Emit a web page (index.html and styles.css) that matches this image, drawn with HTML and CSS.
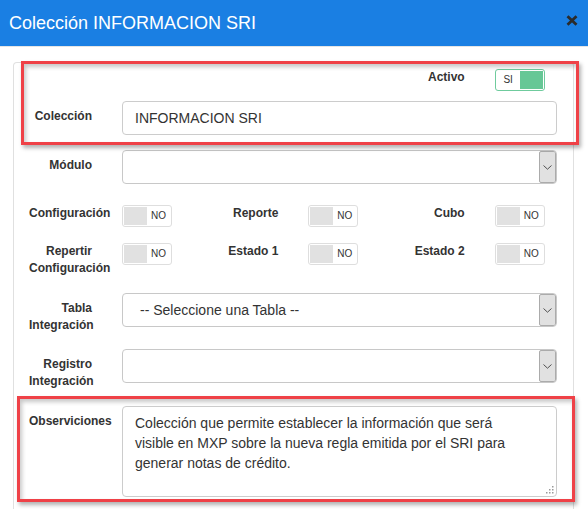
FILE: index.html
```html
<!DOCTYPE html>
<html lang="es">
<head>
<meta charset="utf-8">
<title>Colección INFORMACION SRI</title>
<link rel="stylesheet" href="styles.css">
</head>
<body>
<div class="modal">
  <div class="modal-header">
    <h4 class="modal-title">Colección INFORMACION SRI</h4>
    <span class="close" aria-label="Cerrar">
      <svg width="12" height="11" viewBox="0 0 12 11"><path d="M1.5 1.2 L10.5 9.8 M10.5 1.2 L1.5 9.8" stroke="#2b2b2b" stroke-width="2.8" fill="none"/></svg>
    </span>
  </div>
  <div class="modal-body">
    <div class="panel">
      <div class="grid3 row-activo">
        <div class="cell"></div>
        <div class="cell"></div>
        <div class="cell">
          <div class="label">Activo</div>
          <div class="switch on"><span class="sw-text">SI</span><span class="sw-handle"></span></div>
        </div>
      </div>

      <div class="frow row-coleccion">
        <div class="label pad">Colección</div>
        <div class="input">INFORMACION SRI</div>
      </div>

      <div class="frow row-modulo">
        <div class="label pad">Módulo</div>
        <div class="select"><span class="select-value"></span><span class="select-arrow"><svg width="9" height="5" viewBox="0 0 9 5"><path d="M0.5 0.5 L4.5 4.2 L8.5 0.5" stroke="#505050" stroke-width="1" fill="none"/></svg></span></div>
      </div>

      <div class="grid3 row-config">
        <div class="cell">
          <div class="label">Configuración</div>
          <div class="switch"><span class="sw-handle"></span><span class="sw-text">NO</span></div>
        </div>
        <div class="cell">
          <div class="label">Reporte</div>
          <div class="switch"><span class="sw-handle"></span><span class="sw-text">NO</span></div>
        </div>
        <div class="cell">
          <div class="label">Cubo</div>
          <div class="switch"><span class="sw-handle"></span><span class="sw-text">NO</span></div>
        </div>
      </div>

      <div class="grid3 row-repertir">
        <div class="cell">
          <div class="label">Repertir<br>Configuración</div>
          <div class="switch"><span class="sw-handle"></span><span class="sw-text">NO</span></div>
        </div>
        <div class="cell">
          <div class="label">Estado 1</div>
          <div class="switch"><span class="sw-handle"></span><span class="sw-text">NO</span></div>
        </div>
        <div class="cell">
          <div class="label">Estado 2</div>
          <div class="switch"><span class="sw-handle"></span><span class="sw-text">NO</span></div>
        </div>
      </div>

      <div class="frow row-tabla">
        <div class="label pad">Tabla<br>Integración</div>
        <div class="select"><span class="select-value">-- Seleccione una Tabla --</span><span class="select-arrow"><svg width="9" height="5" viewBox="0 0 9 5"><path d="M0.5 0.5 L4.5 4.2 L8.5 0.5" stroke="#505050" stroke-width="1" fill="none"/></svg></span></div>
      </div>

      <div class="frow row-registro">
        <div class="label pad">Registro<br>Integración</div>
        <div class="select"><span class="select-value"></span><span class="select-arrow"><svg width="9" height="5" viewBox="0 0 9 5"><path d="M0.5 0.5 L4.5 4.2 L8.5 0.5" stroke="#505050" stroke-width="1" fill="none"/></svg></span></div>
      </div>

      <div class="frow row-obs">
        <div class="label pad">Observiciones</div>
        <div class="textarea-wrap">
          <textarea class="textarea" rows="4">Colección que permite establecer la información que será
visible en MXP sobre la nueva regla emitida por el SRI para
generar notas de crédito.</textarea>
          <svg class="grip" width="8" height="8" viewBox="0 0 8 8"><g fill="#9a9a9a"><rect x="6" y="0" width="1.5" height="1.5"/><rect x="3" y="3" width="1.5" height="1.5"/><rect x="6" y="3" width="1.5" height="1.5"/><rect x="0" y="6" width="1.5" height="1.5"/><rect x="3" y="6" width="1.5" height="1.5"/><rect x="6" y="6" width="1.5" height="1.5"/></g></svg>
        </div>
      </div>
    </div>
  </div>
</div>
<div class="mark mark-top"></div>
<div class="mark mark-bottom"></div>
</body>
</html>
```

FILE: styles.css
```css
* { box-sizing: border-box; }

html, body {
  margin: 0;
  padding: 0;
  background: #fff;
  overflow: hidden;
}

body {
  position: relative;
  width: 588px;
  height: 509px;
  font-family: "Liberation Sans", Arial, sans-serif;
  color: #333;
}

.modal-header {
  height: 47px;
  background: #1a7fe3;
  border-bottom: 1px solid #e5e5e5;
  display: flex;
  justify-content: space-between;
  align-items: flex-start;
  padding: 0 10px 0 9px;
}

.modal-title {
  margin: 0;
  padding-top: 13px;
  font-size: 18px;
  line-height: 20px;
  font-weight: normal;
  color: #fff;
}

.close {
  display: block;
  margin-top: 15px;
  width: 12px;
  height: 11px;
}
.close svg { display: block; }

.modal-body {
  padding: 15px 14px 0 13px;
}

.panel {
  border: 1px solid #e0e0e0;
  border-bottom: 0;
  border-radius: 4px 4px 0 0;
  padding-top: 6px;
  height: 447px;
}

.grid3 {
  display: grid;
  grid-template-columns: repeat(3, 1fr);
}

.cell {
  display: grid;
  grid-template-columns: 63px 50px;
  column-gap: 30px;
  padding: 0 15px;
  align-items: start;
}

.frow {
  display: grid;
  grid-template-columns: 63px 1fr;
  column-gap: 30px;
  padding: 0 15px 0 15px;
  align-items: start;
}

.label {
  font-size: 12px;
  line-height: 17px;
  font-weight: bold;
  text-align: right;
  white-space: nowrap;
  color: #333;
}
.label.pad { padding-top: 7px; }

.row-activo { margin-bottom: 10px; }
.row-coleccion { margin-bottom: 15px; }
.row-modulo { margin-bottom: 21px; }
.row-config { margin-bottom: 16px; }
.row-repertir { margin-bottom: 16px; }
.row-tabla { margin-bottom: 15px; }
.row-registro { margin-bottom: 16px; }

.input {
  height: 34px;
  border: 1px solid #ccc;
  border-radius: 4px;
  padding: 0 12px;
  font-size: 14px;
  line-height: 32px;
  color: #333;
  margin-right: 1px;
}

.select {
  height: 34px;
  border: 1px solid #c8c8c8;
  border-radius: 4px;
  display: flex;
  align-items: stretch;
  overflow: hidden;
  margin-right: 1px;
}
.select-value {
  flex: 1;
  padding-left: 17px;
  font-size: 14px;
  line-height: 32px;
  color: #333;
}
.select-arrow {
  width: 17px;
  border: 1px solid #ababab;
  border-radius: 2px;
  background: #e1e1e1;
  display: flex;
  align-items: center;
  justify-content: center;
}
.select-arrow svg { display: block; }

.switch {
  width: 50px;
  height: 22px;
  border: 1px solid #dedede;
  border-radius: 3px;
  padding: 1px;
  display: flex;
  align-items: stretch;
  background: #fff;
}
.sw-handle {
  width: 23px;
  background: #e1e1e1;
}
.sw-text {
  flex: 1;
  text-align: center;
  font-size: 10px;
  line-height: 18px;
  color: #333;
}
.switch.on {
  border-color: #6fcb9d;
}
.switch.on .sw-handle {
  background: #66c796;
}

.textarea-wrap {
  position: relative;
  height: 91px;
  margin-right: 1px;
}
.textarea {
  display: block;
  width: 100%;
  height: 91px;
  border: 1px solid #ccc;
  border-radius: 4px;
  padding: 6px 12px;
  font-family: "Liberation Sans", Arial, sans-serif;
  font-size: 14px;
  line-height: 20px;
  color: #333;
  resize: none;
  overflow: hidden;
  margin: 0;
}
.grip {
  position: absolute;
  right: 3px;
  bottom: 3px;
}

.mark {
  position: absolute;
  border: 3px solid #ef4147;
  box-shadow: 2px 3px 4px rgba(0, 0, 0, 0.3), inset 2px 3px 4px rgba(0, 0, 0, 0.22);
  pointer-events: none;
}
.mark-top {
  left: 21px;
  top: 61px;
  width: 558px;
  height: 84px;
}
.mark-bottom {
  left: 17px;
  top: 396px;
  width: 558px;
  height: 106px;
}
```
